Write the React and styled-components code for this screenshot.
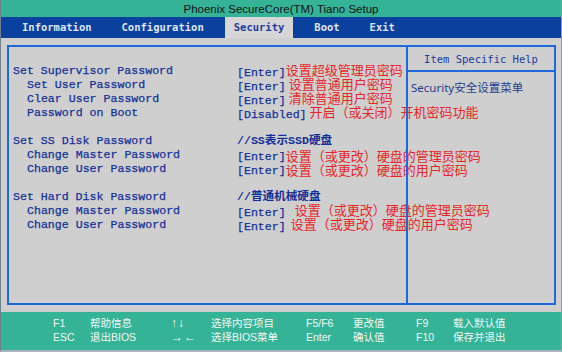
import React from 'react';
import styled, { createGlobalStyle } from 'styled-components';

const GlobalStyle = createGlobalStyle`
  html, body {
    margin: 0;
    padding: 0;
    background: #cfcfcf;
  }
  * { box-sizing: border-box; }
`;

const tabs = ['Information', 'Configuration', 'Security', 'Boot', 'Exit'];

const rows = [
  { label: 'Set Supervisor Password', value: '[Enter]', note: '设置超级管理员密码' },
  { label: 'Set User Password', sub: true, value: '[Enter]', note: '设置普通用户密码', gap: 3 },
  { label: 'Clear User Password', sub: true, value: '[Enter]', note: '清除普通用户密码', gap: 3 },
  { label: 'Password on Boot', sub: true, value: '[Disabled]', note: '开启（或关闭）开机密码功能', gap: 3 },
  { blank: true },
  { label: 'Set SS Disk Password', comment: '//SS表示SSD硬盘' },
  { label: 'Change Master Password', sub: true, value: '[Enter]', note: '设置（或更改）硬盘的管理员密码', drop: 1 },
  { label: 'Change User Password', sub: true, value: '[Enter]', note: '设置（或更改）硬盘的用户密码', drop: 1 },
  { blank: true },
  { label: 'Set Hard Disk Password', comment: '//普通机械硬盘' },
  { label: 'Change Master Password', sub: true, value: '[Enter]', note: '设置（或更改）硬盘的管理员密码', gap: 9 },
  { label: 'Change User Password', sub: true, value: '[Enter]', note: '设置（或更改）硬盘的用户密码', gap: 5 },
];

const keys = [
  ['F1', '帮助信息', '↑↓', '选择内容项目', 'F5/F6', '更改值', 'F9', '载入默认值'],
  ['ESC', '退出BIOS', '→←', '选择BIOS菜单', 'Enter', '确认值', 'F10', '保存并退出'],
];

const App = () => {
  return (
    <Window>
      <GlobalStyle />
      <TitleBar>Phoenix SecureCore(TM) Tiano Setup</TitleBar>
      <NavBar>
        {tabs.map((t) => (
          <Tab key={t} active={t === 'Security'}>{t}</Tab>
        ))}
      </NavBar>
      <Main>
        <Panel>
          <Settings>
            {rows.map((r, i) =>
              r.blank ? (
                <Row key={i} />
              ) : (
                <Row key={i}>
                  <Label sub={r.sub}>{r.label}</Label>
                  {r.comment ? (
                    <Comment>{r.comment}</Comment>
                  ) : (
                    <Value>
                      {r.value}
                      <Note gap={r.gap || 0} drop={r.drop || -1}>{r.note}</Note>
                    </Value>
                  )}
                </Row>
              )
            )}
          </Settings>
          <Help>
            <HelpHeader>Item Specific Help</HelpHeader>
            <HelpBody>Security安全设置菜单</HelpBody>
          </Help>
        </Panel>
      </Main>
      <Footer>
        {keys.map((line) =>
          line.map((k, j) => (
            <KeyCell key={k + j} arrow={j === 2}>{k}</KeyCell>
          ))
        )}
      </Footer>
    </Window>
  );
};

const Window = styled.div`
  width: 562px;
  height: 352px;
  display: flex;
  flex-direction: column;
  border-left: 1px solid #6d8090;
  border-right: 1px solid #8d9aa6;
  border-bottom: 2px solid #aab4bc;
  background: #cfcfcf;
  overflow: hidden;
`;

const TitleBar = styled.div`
  height: 17px;
  flex-shrink: 0;
  background: #35b396;
  color: #101418;
  font-family: "Liberation Sans", Arial, sans-serif;
  font-size: 11.5px;
  line-height: 18px;
  text-align: center;
`;

const NavBar = styled.div`
  height: 21px;
  flex-shrink: 0;
  display: flex;
  gap: 13px;
  padding-left: 12.5px;
  background: #0a409e;
`;

const Tab = styled.div`
  padding: 0 8.5px;
  font-family: "DejaVu Sans Mono", monospace;
  font-weight: bold;
  font-size: 10.5px;
  line-height: 21px;
  color: ${(p) => (p.active ? '#1c3c9e' : '#dde4ee')};
  background: ${(p) => (p.active ? '#d6d6d6' : 'transparent')};
`;

const Main = styled.div`
  flex: 1;
  padding: 7px 5px 7px 6px;
  display: flex;
`;

const Panel = styled.div`
  flex: 1;
  display: grid;
  grid-template-columns: minmax(0, 1fr) 148px;
  border: 2px solid #1f68dc;
`;

const Settings = styled.div`
  min-width: 0;
  padding: 17px 0 0 4px;
`;

const Row = styled.div`
  display: grid;
  grid-template-columns: 224px auto;
  height: 14px;
  line-height: 14px;
  white-space: nowrap;
`;

const Label = styled.div`
  padding-left: ${(p) => (p.sub ? '14px' : '0')};
  font-family: "Liberation Mono", "Courier New", monospace;
  font-size: 11.6px;
  color: #132f96;
  -webkit-text-stroke: 0.25px #132f96;
`;

const Value = styled.div`
  font-family: "Liberation Mono", "Courier New", monospace;
  font-size: 11.6px;
  color: #132f96;
  -webkit-text-stroke: 0.25px #132f96;
`;

const Note = styled.span`
  position: relative;
  top: ${(p) => p.drop}px;
  margin-left: ${(p) => p.gap}px;
  font-family: "Noto Sans CJK SC", sans-serif;
  font-size: 13px;
  color: #e8262a;
  -webkit-text-stroke: 0;
`;

const Comment = styled.div`
  font-family: "Liberation Mono", "Noto Sans CJK SC", monospace;
  font-size: 11.6px;
  font-weight: bold;
  color: #132f96;
`;

const Help = styled.div`
  position: relative;
  border-left: 2px solid #1f68dc;
  display: flex;
  flex-direction: column;
`;

const HelpHeader = styled.div`
  height: 25px;
  border-bottom: 2px solid #1f68dc;
  font-family: "DejaVu Sans Mono", monospace;
  font-size: 10.5px;
  line-height: 24px;
  text-align: center;
  color: #1b3a9e;
`;

const HelpBody = styled.div`
  padding: 8px 0 0 3px;
  font-family: "Noto Sans", "Noto Sans CJK SC", sans-serif;
  font-size: 11.5px;
  line-height: 16px;
  color: #283c8c;
`;

const Footer = styled.div`
  height: 38px;
  flex-shrink: 0;
  background: #35b396;
  display: grid;
  grid-template-columns: 37px 81px 40px 95px 47px 63px 37px auto;
  grid-auto-rows: 14.6px;
  padding: 3.5px 0 0 52px;
  font-family: "Liberation Sans", "Noto Sans CJK SC", sans-serif;
  font-size: 10.5px;
  line-height: 14.6px;
  color: #f2f6f4;
`;

const KeyCell = styled.div`
  white-space: nowrap;
  font-size: ${(p) => (p.arrow ? '12px' : '10.5px')};
  letter-spacing: ${(p) => (p.arrow ? '1px' : '0')};
  font-weight: ${(p) => (p.arrow ? 'bold' : 'normal')};
`;

export default App;
